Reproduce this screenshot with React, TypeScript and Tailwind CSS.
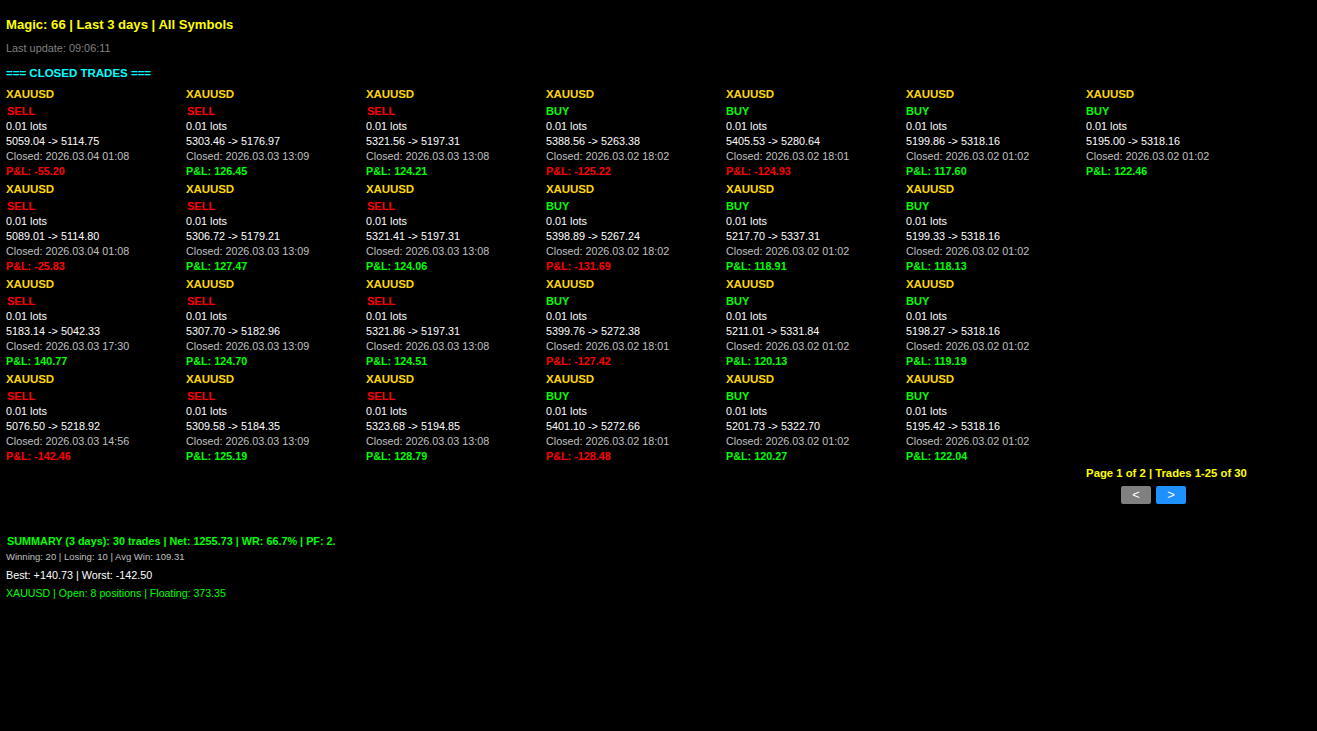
type Trade = {
  side: "SELL" | "BUY";
  prices: string;
  closed: string;
  pnl: string;
};

const TRADES: Trade[][] = [
  [
    { side: "SELL", prices: "5059.04 -> 5114.75", closed: "2026.03.04 01:08", pnl: "-55.20" },
    { side: "SELL", prices: "5303.46 -> 5176.97", closed: "2026.03.03 13:09", pnl: "126.45" },
    { side: "SELL", prices: "5321.56 -> 5197.31", closed: "2026.03.03 13:08", pnl: "124.21" },
    { side: "BUY", prices: "5388.56 -> 5263.38", closed: "2026.03.02 18:02", pnl: "-125.22" },
    { side: "BUY", prices: "5405.53 -> 5280.64", closed: "2026.03.02 18:01", pnl: "-124.93" },
    { side: "BUY", prices: "5199.86 -> 5318.16", closed: "2026.03.02 01:02", pnl: "117.60" },
    { side: "BUY", prices: "5195.00 -> 5318.16", closed: "2026.03.02 01:02", pnl: "122.46" },
  ],
  [
    { side: "SELL", prices: "5089.01 -> 5114.80", closed: "2026.03.04 01:08", pnl: "-25.83" },
    { side: "SELL", prices: "5306.72 -> 5179.21", closed: "2026.03.03 13:09", pnl: "127.47" },
    { side: "SELL", prices: "5321.41 -> 5197.31", closed: "2026.03.03 13:08", pnl: "124.06" },
    { side: "BUY", prices: "5398.89 -> 5267.24", closed: "2026.03.02 18:02", pnl: "-131.69" },
    { side: "BUY", prices: "5217.70 -> 5337.31", closed: "2026.03.02 01:02", pnl: "118.91" },
    { side: "BUY", prices: "5199.33 -> 5318.16", closed: "2026.03.02 01:02", pnl: "118.13" },
  ],
  [
    { side: "SELL", prices: "5183.14 -> 5042.33", closed: "2026.03.03 17:30", pnl: "140.77" },
    { side: "SELL", prices: "5307.70 -> 5182.96", closed: "2026.03.03 13:09", pnl: "124.70" },
    { side: "SELL", prices: "5321.86 -> 5197.31", closed: "2026.03.03 13:08", pnl: "124.51" },
    { side: "BUY", prices: "5399.76 -> 5272.38", closed: "2026.03.02 18:01", pnl: "-127.42" },
    { side: "BUY", prices: "5211.01 -> 5331.84", closed: "2026.03.02 01:02", pnl: "120.13" },
    { side: "BUY", prices: "5198.27 -> 5318.16", closed: "2026.03.02 01:02", pnl: "119.19" },
  ],
  [
    { side: "SELL", prices: "5076.50 -> 5218.92", closed: "2026.03.03 14:56", pnl: "-142.46" },
    { side: "SELL", prices: "5309.58 -> 5184.35", closed: "2026.03.03 13:09", pnl: "125.19" },
    { side: "SELL", prices: "5323.68 -> 5194.85", closed: "2026.03.03 13:08", pnl: "128.79" },
    { side: "BUY", prices: "5401.10 -> 5272.66", closed: "2026.03.02 18:01", pnl: "-128.48" },
    { side: "BUY", prices: "5201.73 -> 5322.70", closed: "2026.03.02 01:02", pnl: "120.27" },
    { side: "BUY", prices: "5195.42 -> 5318.16", closed: "2026.03.02 01:02", pnl: "122.04" },
  ],
];

function TradeCard({ trade }: { trade: Trade }) {
  const isLoss = trade.pnl.startsWith("-");
  return (
    <div className="h-[95px] w-[180px] text-[10.8px] leading-[15px]">
      <div className="h-[18px] text-[11.5px] font-bold leading-[18px] tracking-[-0.1px] text-[#ffd700]">XAUUSD</div>
      <div
        className={
          trade.side === "SELL"
            ? "h-[16px] pl-px text-[11px] font-bold leading-[16px] text-[#ff0000]"
            : "h-[16px] text-[11px] font-bold leading-[16px] text-[#00ff00]"
        }
      >
        {trade.side}
      </div>
      <div className="text-white">0.01 lots</div>
      <div className="text-white">{trade.prices}</div>
      <div className="text-[10.75px] text-[#c0c0c0]">Closed: {trade.closed}</div>
      <div className={isLoss ? "font-bold text-[#ff0000]" : "font-bold text-[#00ff00]"}>
        P&amp;L: {trade.pnl}
      </div>
    </div>
  );
}

export default function App() {
  return (
    <div className="h-[731px] overflow-hidden bg-black pl-[6px] pt-[15px] font-['Liberation_Sans',Arial,sans-serif]">
      <h1 className="h-[18px] text-[13.1px] font-bold leading-[19px] text-[#ffff00]">
        Magic: 66 | Last 3 days | All Symbols
      </h1>
      <p className="mt-[6px] h-[18px] text-[10.9px] leading-[18px] text-[#808080]">Last update: 09:06:11</p>
      <p className="mt-[7px] h-[21px] text-[11.5px] font-bold leading-[18px] text-[#00ffff]">=== CLOSED TRADES ===</p>

      <div className="flex flex-col">
        {TRADES.map((row, i) => (
          <div key={i} className="flex">
            {row.map((trade) => (
              <TradeCard key={trade.prices} trade={trade} />
            ))}
          </div>
        ))}
      </div>

      <div className="ml-[1080px] mt-px w-[161px]">
        <p className="text-center text-[11.3px] font-bold leading-[15px] text-[#ffff00]">
          Page 1 of 2 | Trades 1-25 of 30
        </p>
        <div className="mt-[5px] flex gap-[5px] pl-[35px]">
          <button className="h-[18px] w-[30px] rounded-[2px] bg-[#808080] text-[13px] leading-[18px] text-white">
            &lt;
          </button>
          <button className="h-[18px] w-[30px] rounded-[2px] bg-[#1e90ff] text-[13px] leading-[18px] text-white">
            &gt;
          </button>
        </div>
      </div>

      <div className="mt-[29px] pl-px text-[10.83px] font-bold leading-[16px] text-[#00ff00]">
        SUMMARY (3 days): 30 trades | Net: 1255.73 | WR: 66.7% | PF: 2.
      </div>
      <div className="mt-px text-[9.5px] leading-[14px] text-[#c0c0c0]">Winning: 20 | Losing: 10 | Avg Win: 109.31</div>
      <div className="mt-[4px] text-[10.8px] leading-[15px] text-white">Best: +140.73 | Worst: -142.50</div>
      <div className="mt-[3px] text-[10.6px] leading-[15px] text-[#00ff00]">XAUUSD | Open: 8 positions | Floating: 373.35</div>
    </div>
  );
}
